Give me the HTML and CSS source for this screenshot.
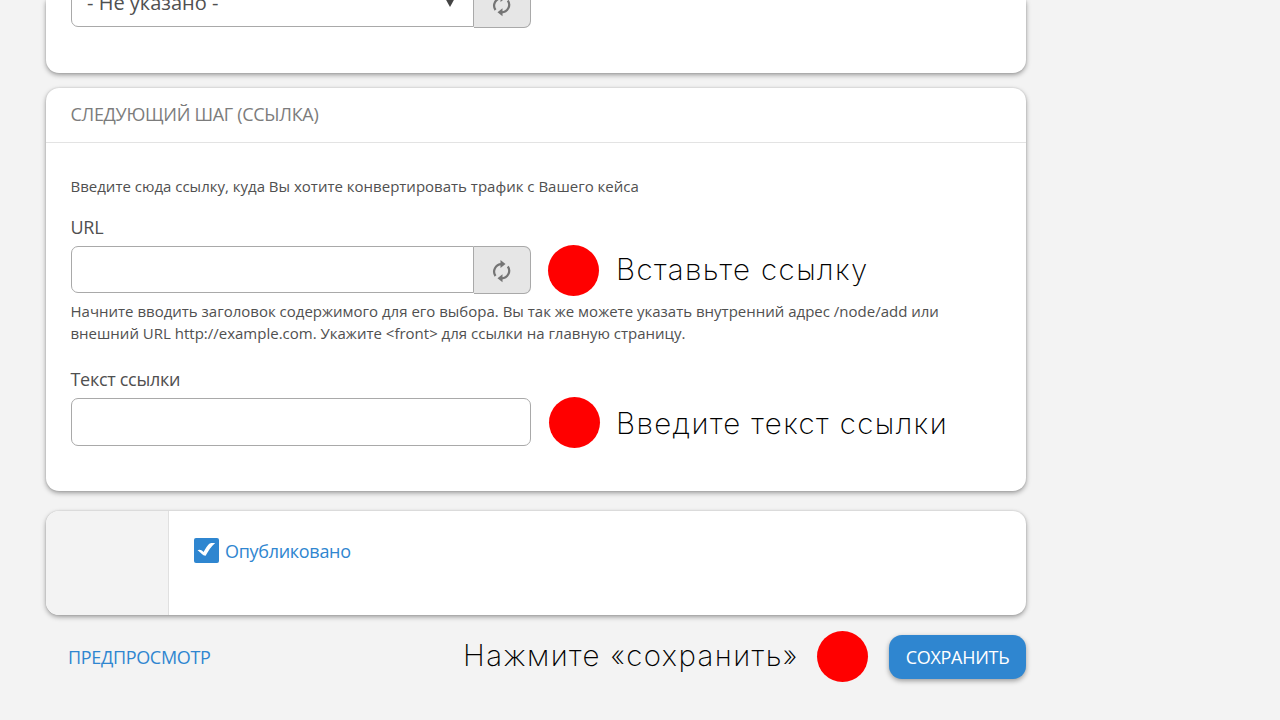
FILE: index.html
```html
<!DOCTYPE html>
<html lang="ru">
<head>
  <meta charset="utf-8">
  <title>Редактирование кейса</title>
  <link rel="stylesheet" href="styles.css">
</head>
<body>
  <form class="page">
    <div class="card card-top">
      <div class="field-row">
        <div class="select">- Не указано - <span class="arrow"></span></div>
        <div class="refresh">
          <svg width="20" height="24" viewBox="0 0 20 24"><path d="M3.500 17A7.500 7.500 0 0 1 9.500 5.200M15.800 7.500A7.500 7.500 0 0 1 9.500 19.300" /><path class="head" d="M8.500 1l5 4-5 4zM10.500 15.300l-5 4 5 4z" /></svg>
        </div>
      </div>
    </div>

    <div class="card card-link">
      <div class="card-title">СЛЕДУЮЩИЙ ШАГ (ССЫЛКА)</div>
      <div class="card-body">
        <p class="intro">Введите сюда ссылку, куда Вы хотите конвертировать трафик с Вашего кейса</p>
        <label class="label">URL</label>
        <div class="field-row">
          <div class="input with-btn"></div>
          <div class="refresh">
            <svg width="20" height="24" viewBox="0 0 20 24"><path d="M3.500 17A7.500 7.500 0 0 1 9.500 5.200M15.800 7.500A7.500 7.500 0 0 1 9.500 19.300" /><path class="head" d="M8.500 1l5 4-5 4zM10.500 15.300l-5 4 5 4z" /></svg>
          </div>
          <div class="dot"></div>
          <div class="hint hint-url">Вставьте ссылку</div>
        </div>
        <p class="help">Начните вводить заголовок содержимого для его выбора. Вы так же можете указать внутренний адрес /node/add или<br>внешний URL http://example.com. Укажите &lt;front&gt; для ссылки на главную страницу.</p>
        <label class="label">Текст ссылки</label>
        <div class="field-row">
          <div class="input"></div>
          <div class="dot dot-text"></div>
          <div class="hint">Введите текст ссылки</div>
        </div>
      </div>
    </div>

    <div class="card card-publish">
      <div class="side"></div>
      <div class="publish">
        <span class="checkbox"><svg width="25" height="25" viewBox="0 0 25 25"><path d="M3.500 12.300C5.300 11.200 7.400 11.700 9.600 14C11.600 10 14 6.800 15.700 5.500C17.500 4.900 19.500 4.900 21.200 5.100C17.200 8.500 14.300 13 11.600 17.800C9 18 6.500 14.300 3.500 12.300z" /></svg></span>
        <span class="publish-label">Опубликовано</span>
      </div>
    </div>

    <div class="actions">
      <a class="preview">ПРЕДПРОСМОТР</a>
      <div class="hint hint-save">Нажмите «сохранить»</div>
      <div class="dot dot-save"></div>
      <div class="save">СОХРАНИТЬ</div>
    </div>
  </form>
</body>
</html>
```

FILE: styles.css
```css
body, html {
  margin: 0;
  padding: 0;
  height: 100%;
  overflow: hidden;
  background: #f3f3f3;
  color: #505050;
  font-family: "Open Sans", sans-serif;
}
.page {
  width: 980px;
  margin-left: 46px;
}
.card {
  box-sizing: border-box;
  background: #fff;
  border-radius: 13px;
  box-shadow: 0 2px 5px rgba(0, 0, 0, 0.36), 0 0 2px rgba(0, 0, 0, 0.15);
}
.card-top {
  display: flex;
  height: 73px;
  padding-left: 25px;
  border-radius: 0 0 13px 13px;
}
.card-top .field-row {
  margin-top: -20px;
}
.card-link {
  height: 403px;
  margin-top: 15px;
}
.card-title {
  height: 54px;
  padding-left: 24.5px;
  border-bottom: 1px solid #e3e3e3;
  color: #7c7c7c;
  font-size: 18px;
  line-height: 52px;
  letter-spacing: -0.3px;
}
.card-body {
  padding: 32px 25px 0 24.5px;
}
.intro, .help {
  margin: 0;
  font-size: 15px;
  line-height: 22px;
  white-space: nowrap;
}
.label {
  display: block;
  margin: 18px 0 7px;
  font-size: 18px;
  line-height: 24px;
  letter-spacing: -0.3px;
}
.help {
  margin-top: 6px;
}
.help + .label {
  margin-top: 23px;
}
.field-row {
  display: flex;
  align-items: flex-start;
  height: 48px;
}
.card-body .field-row {
  margin-left: 0.5px;
}
.input, .select {
  box-sizing: border-box;
  width: 460px;
  height: 48px;
  border: 1px solid #a9a9a9;
  border-radius: 7px;
  background: #fff;
}
.with-btn, .select {
  width: 403px;
  height: 47px;
  border-radius: 7px 0 0 7px;
}
.select {
  display: flex;
  justify-content: space-between;
  align-items: center;
  padding: 0 18px 2px 15px;
  font-size: 20px;
}
.arrow {
  border: 5px solid transparent;
  border-top: 9px solid #444;
  border-bottom: 0;
}
.refresh {
  box-sizing: border-box;
  display: flex;
  justify-content: center;
  align-items: center;
  width: 57px;
  height: 48px;
  padding-top: 2px;
  border: 1px solid #a9a9a9;
  border-left: 0;
  border-radius: 0 7px 7px 0;
  background: #e6e6e6;
}
.refresh svg {
  fill: none;
  stroke: #757575;
  stroke-width: 2.2;
}
.refresh .head {
  fill: #757575;
  stroke: none;
}
.dot {
  width: 51px;
  height: 51px;
  margin: -1px 17px 0;
  border-radius: 50%;
  background: #f00;
}
.dot-text {
  margin: -1px 16px 0 18px;
}
.hint {
  color: #000;
  font-family: Inter, sans-serif;
  font-size: 29.5px;
  font-weight: 200;
  line-height: 50px;
  letter-spacing: 1.4px;
  white-space: nowrap;
}
.hint-url {
  line-height: 46px;
}
.card-publish {
  display: flex;
  height: 104px;
  margin-top: 20px;
  overflow: hidden;
}
.side {
  width: 122px;
  border-right: 1px solid #e0e0e0;
  background: #f3f3f3;
}
.publish {
  display: flex;
  padding: 27px 0 0 25px;
  color: #2f86d0;
}
.checkbox {
  width: 25px;
  height: 25px;
  margin-right: 6px;
  border-radius: 2px;
  background: #2f86d0;
}
.checkbox svg {
  display: block;
  fill: #fff;
}
.publish-label {
  font-size: 18px;
  line-height: 27px;
  letter-spacing: -0.3px;
}
.actions {
  display: flex;
  height: 44px;
  margin-top: 20px;
  line-height: 45px;
}
.preview {
  width: 395px;
  padding-left: 22px;
  color: #2f86d0;
  font-size: 18px;
  letter-spacing: -0.33px;
}
.hint-save {
  width: 354px;
  line-height: 40px;
}
.dot-save {
  margin: -4px 21px 0 0;
}
.save {
  width: 137px;
  border-radius: 13px;
  background: #2f86d0;
  box-shadow: 0 2px 5px rgba(0, 0, 0, 0.36);
  color: #fff;
  font-size: 18px;
  letter-spacing: -0.3px;
  text-align: center;
}
```
